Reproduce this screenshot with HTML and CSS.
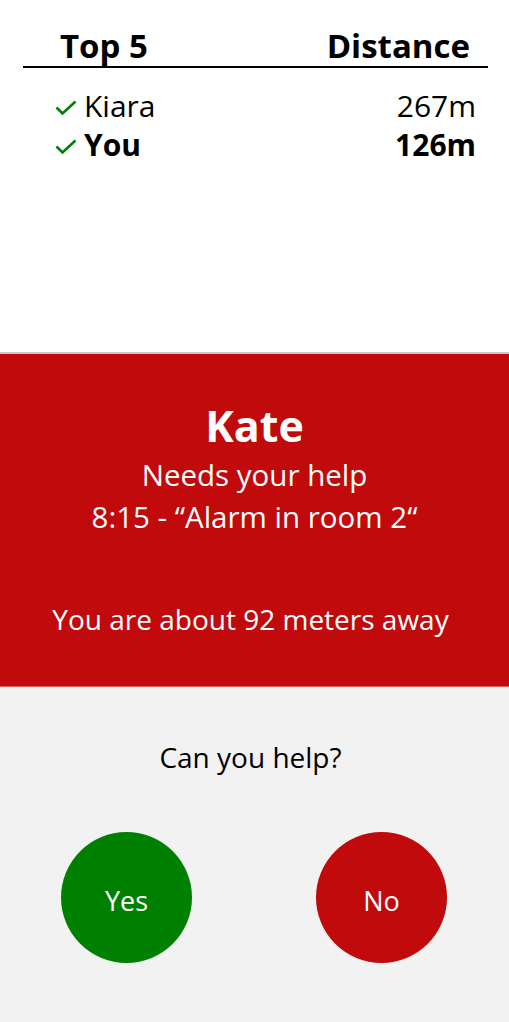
FILE: index.html
```html
<!DOCTYPE html>
<html lang="en">
<head>
<meta charset="utf-8">
<link rel="stylesheet" href="styles.css">
</head>
<body>
<div class="app">
  <section class="board">
    <div class="board-head">
      <span>Top 5</span>
      <span>Distance</span>
    </div>
    <ul class="board-list">
      <li class="row">
        <span class="name"><svg class="check" viewBox="0 0 22 16" width="22" height="16"><path d="M1.5 7.5 L7.5 13.5 L20.5 1.5" fill="none" stroke="#008000" stroke-width="2.6"/></svg>Kiara</span>
        <span class="dist">267m</span>
      </li>
      <li class="row me">
        <span class="name"><svg class="check" viewBox="0 0 22 16" width="22" height="16"><path d="M1.5 7.5 L7.5 13.5 L20.5 1.5" fill="none" stroke="#008000" stroke-width="2.6"/></svg>You</span>
        <span class="dist">126m</span>
      </li>
    </ul>
  </section>
  <section class="alert">
    <h1 class="alert-name">Kate</h1>
    <p class="alert-line">Needs your help</p>
    <p class="alert-line">8:15 - “Alarm in room 2“</p>
    <p class="alert-dist">You are about 92 meters away</p>
  </section>
  <section class="answer">
    <p class="question">Can you help?</p>
    <div class="buttons">
      <button class="btn yes">Yes</button>
      <button class="btn no">No</button>
    </div>
  </section>
</div>
</body>
</html>
```
FILE: styles.css
```css
* { box-sizing: border-box; }
html, body { margin: 0; padding: 0; }
body {
  font-family: "Open Sans", "Liberation Sans", sans-serif;
  color: #000;
  background: #f2f2f2;
}
.app {
  width: 509px;
  min-height: 1022px;
  display: flex;
  flex-direction: column;
}
.board {
  height: 352px;
  background: #fff;
  padding: 26px 21px 0 23px;
}
.board-head {
  display: flex;
  justify-content: space-between;
  padding: 0 18px 0 37px;
  font-weight: 700;
  font-size: 33px;
  line-height: 40px;
  border-bottom: 2px solid #000;
}
.board-list {
  list-style: none;
  margin: 0;
  padding: 18px 12px 0 32px;
}
.row {
  display: flex;
  justify-content: space-between;
  font-size: 30px;
  line-height: 39px;
}
.row.me { font-weight: 700; }
.name { display: flex; align-items: center; gap: 7px; }
.check { flex: none; margin-top: 4px; }
.alert {
  height: 335px;
  background: #c00a0c;
  border-top: 2px solid #c8c8c8;
  border-bottom: 1px solid #e05a5a;
  color: #fff;
  text-align: center;
  padding-top: 44px;
}
.alert-name {
  margin: 0;
  font-size: 43px;
  line-height: 56px;
  font-weight: 700;
}
.alert-line {
  margin: 0;
  font-size: 29.5px;
  line-height: 42px;
}
.alert-dist {
  margin: 60px 8px 0 0;
  font-size: 28px;
  line-height: 42px;
}
.answer {
  flex: 1;
  background: #f2f2f2;
  padding-top: 50px;
}
.question {
  margin: 0 8px 0 0;
  text-align: center;
  font-size: 28px;
  line-height: 40px;
}
.buttons {
  display: flex;
  justify-content: space-between;
  padding: 55px 62px 0 61px;
}
.btn {
  width: 131px;
  height: 131px;
  border-radius: 50%;
  border: none;
  color: #fff;
  font-family: inherit;
  font-size: 27px;
  padding: 6px 0 0;
}
.yes { background: #008000; }
.no { background: #c00a0c; }
```
